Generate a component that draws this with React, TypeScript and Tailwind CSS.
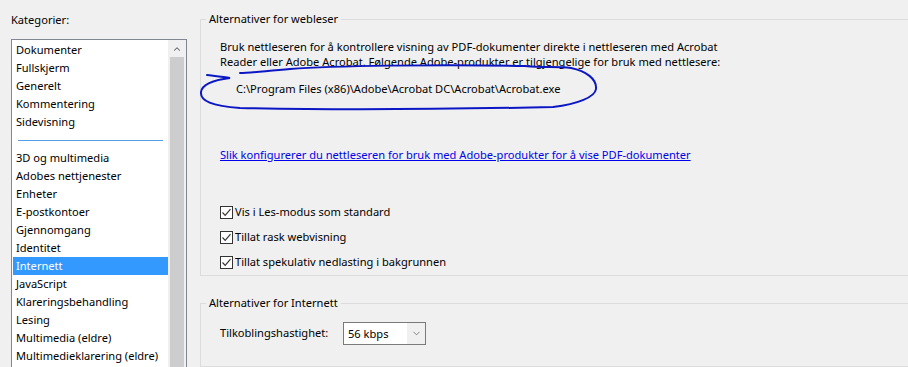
import { ChevronDown, ChevronUp } from "lucide-react";

const topItems = ["Dokumenter", "Fullskjerm", "Generelt", "Kommentering", "Sidevisning"];
const restItems = [
  "3D og multimedia",
  "Adobes nettjenester",
  "Enheter",
  "E-postkontoer",
  "Gjennomgang",
  "Identitet",
  "Internett",
  "JavaScript",
  "Klareringsbehandling",
  "Lesing",
  "Multimedia (eldre)",
  "Multimedieklarering (eldre)",
];

const checks = [
  "Vis i Les-modus som standard",
  "Tillat rask webvisning",
  "Tillat spekulativ nedlasting i bakgrunnen",
];

const Item = ({ label }: { label: string }) => {
  const selected = label === "Internett";
  return (
    <div
      className={`h-[18px] leading-[18px] pl-[3px] ${
        selected ? "bg-[#3399ff] text-white" : "text-black"
      }`}
    >
      {label}
    </div>
  );
};

const CheckRow = ({ label }: { label: string }) => (
  <div className="flex items-center h-[25px]">
    <span className="w-[13px] h-[13px] border border-[#333333] bg-white flex items-center justify-center">
      <svg width="11" height="11" viewBox="0 0 11 11">
        <path d="M1.5 5.5 L4.2 8.3 L9.5 2.2" fill="none" stroke="#333333" strokeWidth="1.2" />
      </svg>
    </span>
    <span className="ml-[2px]">{label}</span>
  </div>
);

export default function App() {
  return (
    <div
      className="relative w-[908px] h-[367px] overflow-hidden bg-[#f0f0f0] text-[11.1px] text-black flex"
      style={{ fontFamily: '"Noto Sans", "Open Sans", sans-serif' }}
    >
      {/* categories */}
      <div className="w-[200px] shrink-0 pl-[11px] pt-[12px]">
        <div className="h-[16px] leading-[16px]">Kategorier:</div>
        <div className="mt-[11px] w-[176px] h-[400px] border border-[#828790] bg-white flex">
          <div className="flex-1 pl-[1px] pt-[1px]">
            {topItems.map((i) => (
              <Item key={i} label={i} />
            ))}
            <div className="h-[18px] flex items-center px-[5px]">
              <div className="h-px w-full bg-[#569de5]" />
            </div>
            {restItems.map((i) => (
              <Item key={i} label={i} />
            ))}
          </div>
          <div className="w-[18px] bg-[#f0f0f0] flex flex-col">
            <div className="h-[17px] flex items-center justify-center text-[#606060]">
              <ChevronUp size={10} strokeWidth={2.5} />
            </div>
            <div className="flex-1 mx-[2px] bg-[#cdcdcd]" />
          </div>
        </div>
      </div>

      {/* options */}
      <div className="flex-1 min-w-[760px] flex flex-col">
        <fieldset className="mt-[11px] h-[270px] border border-[#dcdcdc]">
          <legend className="ml-[5px] px-[3px] h-[16px] leading-[16px]">Alternativer for webleser</legend>
          <div className="pl-[19px]">
            <div className="mt-[12px] leading-[15px]">
              Bruk nettleseren for å kontrollere visning av PDF-dokumenter direkte i nettleseren med Acrobat
              <br />
              Reader eller Adobe Acrobat. Følgende Adobe-produkter er tilgjengelige for bruk med nettlesere:
            </div>
            <div className="mt-[11px] ml-[16px] h-[18px] leading-[18px]">
              C:\Program Files (x86)\Adobe\Acrobat DC\Acrobat\Acrobat.exe
            </div>
            <div className="mt-[48px] h-[18px] leading-[18px]">
              <a className="text-[#0000ee] underline">
                Slik konfigurerer du nettleseren for bruk med Adobe-produkter for å vise PDF-dokumenter
              </a>
            </div>
            <div className="mt-[36px]">
              {checks.map((c) => (
                <CheckRow key={c} label={c} />
              ))}
            </div>
          </div>
        </fieldset>
        <fieldset className="mt-[19px] h-[100px] border border-[#dcdcdc]">
          <legend className="ml-[5px] px-[3px] h-[16px] leading-[16px]">Alternativer for Internett</legend>
          <div className="pl-[19px] mt-[11px] flex items-center">
            <span className="w-[123px]">Tilkoblingshastighet:</span>
            <div className="w-[83px] h-[23px] border border-[#7a7a7a] flex">
              <div className="w-[63px] bg-white pl-[4px] leading-[21px]">56 kbps</div>
              <div className="flex-1 bg-[#f0f0f0] flex items-center justify-center text-[#555555]">
                <ChevronDown size={11} strokeWidth={1.5} />
              </div>
            </div>
          </div>
        </fieldset>
      </div>

      {/* hand-drawn annotation */}
      <svg className="absolute left-0 top-0 pointer-events-none" width="908" height="367">
        <path
          d="M207 75 C 215 76, 224 77, 230 78 C 214 80, 202 84, 201 92 C 200 101, 212 106, 240 108 C 330 110, 460 109, 553 107 C 578 104, 595 97, 596 89 C 597 79, 586 71, 571 68 C 556 66, 545 68, 525 66 C 440 64, 330 66, 290 69 C 265 71, 250 73, 240 73"
          fill="none"
          stroke="#0c17c4"
          strokeWidth="2"
          strokeLinecap="round"
        />
      </svg>
    </div>
  );
}
